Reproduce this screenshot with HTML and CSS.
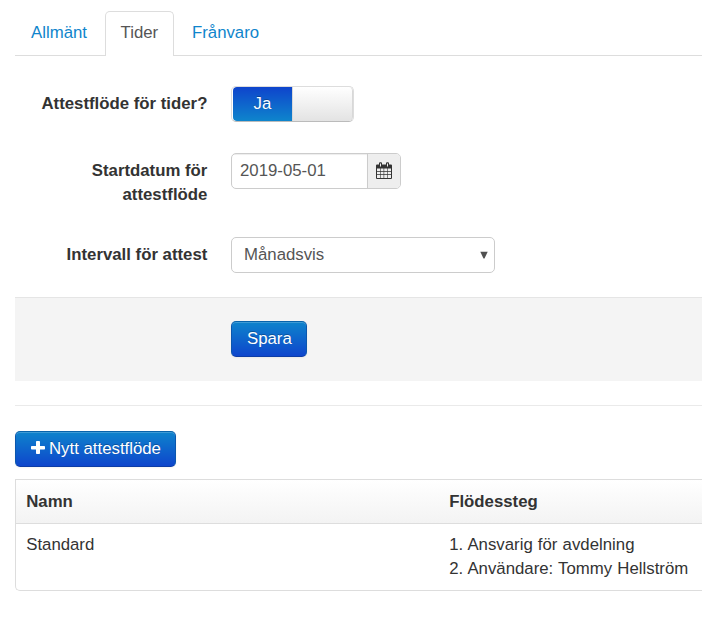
FILE: index.html
```html
<!DOCTYPE html>
<html lang="sv">
<head>
<meta charset="utf-8">
<title>Tider</title>
<link rel="stylesheet" href="styles.css">
</head>
<body>
<main class="page">
  <nav class="tabs">
    <a class="tab">Allmänt</a>
    <a class="tab tab-active">Tider</a>
    <a class="tab">Frånvaro</a>
  </nav>
  <form class="form">
    <div class="row">
      <label class="label">Attestflöde för tider?</label>
      <div class="switch"><span class="switch-on">Ja</span><span class="switch-off"></span></div>
    </div>
    <div class="row">
      <label class="label label-narrow">Startdatum för attestflöde</label>
      <div class="date">
        <span class="date-value">2019-05-01</span>
        <span class="date-addon">
          <svg width="16" height="18" viewBox="0 0 16 18">
            <path fill="#333" fill-rule="evenodd" d="M1 2.500h2V1.500Q3 .3 4 .3h1q1 0 1 1.200v1h4v-1Q10 .3 11 .3h1q1 0 1 1.200v1h2q1 0 1 1V16q0 1-1 1H1q-1 0-1-1V3.500q0-1 1-1zM4 1.500V4.500h1V1.500zM11 1.500V4.500h1V1.500zM1 6.500V9h3V6.500zM4.600 6.500V9h3V6.500zM8.200 6.500V9h3V6.500zM11.800 6.500V9H15V6.500zM1 9.700v2.600h3V9.700zM4.600 9.700v2.600h3V9.700zM8.200 9.700v2.600h3V9.700zM11.800 9.700v2.600H15V9.700zM1 13v3h3v-3zM4.600 13v3h3v-3zM8.200 13v3h3v-3zM11.800 13v3H15v-3z"/>
          </svg>
        </span>
      </div>
    </div>
    <div class="row row-last">
      <label class="label">Intervall för attest</label>
      <div class="select">
        <span>Månadsvis</span>
        <svg width="8" height="8" viewBox="0 0 8 8"><path fill="#505050" d="M.3.800h7.400L4.500 7.500H3.500z"/></svg>
      </div>
    </div>
    <div class="actions"><button type="button" class="btn">Spara</button></div>
  </form>
  <hr class="rule">
  <button type="button" class="btn btn-new">
    <svg class="plus" width="14" height="14" viewBox="0 0 14 14"><path fill="#fff" d="M5.800 0h2.400q.8 0 .8.800V5h4.200q.8 0 .8.800v1.900q0 .8-.8.800H9v3.700q0 .8-.8.800H5.800q-.8 0-.8-.8V8.500H.8q-.8 0-.8-.8V5.800Q0 5 .8 5H5V.8q0-.8.800-.8z"/></svg>
    <span>Nytt attestflöde</span>
  </button>
  <section class="table">
    <div class="table-row table-head"><div>Namn</div><div>Flödessteg</div></div>
    <div class="table-row"><div>Standard</div><div class="steps">1. Ansvarig för avdelning<br>2. Användare: Tommy Hellström</div></div>
  </section>
</main>
</body>
</html>
```
FILE: styles.css
```css
* { box-sizing: border-box; }
body {
  margin: 0;
  background: #fff;
  color: #333;
  font: 16.8px/24px "Liberation Sans", Arial, sans-serif;
}
.page { padding: 11px 0 0 15px; }
.tabs {
  display: flex;
  gap: 2px;
  height: 45px;
  border-bottom: 1px solid #ddd;
}
.tab {
  height: 45px;
  padding: 9px 15px 0;
  border: 1px solid transparent;
  border-bottom: 0;
  color: #0f85cc;
}
.tab-active {
  width: 69px;
  padding: 9px 14px 0 14.6px;
  border-color: #ddd;
  border-radius: 5px 5px 0 0;
  background: #fff;
  color: #555;
}
.form { padding-top: 30px; }
.row {
  display: flex;
  align-items: flex-start;
  gap: 23.6px;
  margin-bottom: 30px;
}
.row-last { margin-bottom: 24px; }
.label {
  width: 192.4px;
  padding-top: 6px;
  font-weight: bold;
  text-align: right;
}
.label-narrow { padding-left: 50px; }
.switch {
  display: flex;
  width: 123px;
  height: 36px;
  margin-bottom: 1px;
  border: 1px solid #ddd;
  border-bottom-color: #bbb;
  border-radius: 5px;
  overflow: hidden;
}
.switch-on {
  width: 59px;
  margin-left: 1px;
  padding-top: 5px;
  border-radius: 4px 0 0 4px;
  background: linear-gradient(#0e44cc, #0e85cc);
  color: #fff;
  text-align: center;
  text-shadow: 0 -1px 0 rgba(0, 0, 0, .25);
}
.switch-off {
  flex: 1;
  border-left: 1px solid #d8d8d8;
  border-right: 1px solid #d8d8d8;
  border-radius: 0 4px 4px 0;
  background: linear-gradient(#fff, #e3e3e3);
}
.date {
  display: flex;
  width: 170px;
  height: 36px;
  border: 1px solid #ccc;
  border-radius: 5px;
  overflow: hidden;
}
.date-value {
  flex: 1;
  padding: 5px 0 0 8px;
  box-shadow: inset 0 1px 1px rgba(0, 0, 0, .075);
  color: #555;
}
.date-addon {
  width: 33px;
  padding: 7.5px 0 0 8px;
  border-left: 1px solid #ccc;
  background: #eee;
}
.date-addon svg { display: block; }
.select {
  display: flex;
  align-items: center;
  justify-content: space-between;
  width: 264px;
  height: 36px;
  padding: 0 6px 0 12px;
  border: 1px solid #ccc;
  border-radius: 5px;
  color: #555;
}
.select svg { margin-top: -1px; }
.actions {
  height: 84px;
  padding: 23px 0 0 216px;
  border-top: 1px solid #e5e5e5;
  background: #f4f4f4;
}
.rule {
  height: 1px;
  margin: 24px 0 25px;
  border: 0;
  background: #eaeaea;
}
.btn {
  display: flex;
  align-items: center;
  width: 76px;
  height: 36px;
  padding: 0 0 1px 15px;
  border: 1px solid;
  border-color: #0863ab #0b57ad #0c3ca5;
  border-radius: 5px;
  background: linear-gradient(#0e85cc, #0e44cc) border-box;
  box-shadow: inset 0 1px 0 rgba(255, 255, 255, .2), 0 1px 2px rgba(0, 0, 0, .05);
  color: #fff;
  font: inherit;
  text-shadow: 0 -1px 0 rgba(0, 0, 0, .25);
  white-space: nowrap;
}
.btn-new { gap: 4px; width: 161px; }
.plus { flex: none; margin-top: -1px; }
.table {
  height: 112px;
  margin-top: 12px;
  border: 1px solid #ddd;
  border-right: 0;
  border-radius: 0 0 0 5px;
}
.table-row {
  display: grid;
  grid-template-columns: 423px 1fr;
  padding: 9px 0 0 10.2px;
}
.table-head {
  height: 44px;
  padding-top: 10px;
  border-bottom: 1px solid #ddd;
  background: linear-gradient(#fff, #f3f3f3);
  font-weight: bold;
}
.steps { white-space: nowrap; word-spacing: .5px; }
```
